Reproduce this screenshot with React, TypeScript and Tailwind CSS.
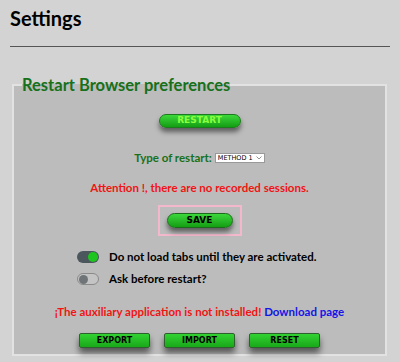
import React from 'react';

const font = { fontFamily: 'Lato, "Noto Sans", sans-serif' };
const btnFont = { fontFamily: '"DejaVu Sans", Verdana, sans-serif' };

const Toggle = ({ on }: { on: boolean }) =>
  on ? (
    <div className="w-[22px] h-[12px] rounded-full bg-[#4b575c] flex items-center justify-end px-[1px]">
      <div className="w-[10px] h-[10px] rounded-full bg-[#1ec51e]" />
    </div>
  ) : (
    <div className="w-[22px] h-[12px] rounded-full bg-[#c4c4c4] border border-[#8a8a8a] flex items-center px-[1px]">
      <div className="w-[9px] h-[9px] rounded-full bg-[#6e7478]" />
    </div>
  );

const BarButton = ({ label }: { label: string }) => (
  <div
    className="w-[71px] h-[15px] flex items-center justify-center rounded-[2px] border border-[#2f5f2f] bg-gradient-to-b from-[#31d331] to-[#19a819] shadow-[0_5px_6px_rgba(0,0,0,0.55)] text-[8px] font-bold text-black"
    style={btnFont}
  >
    {label}
  </div>
);

export default function App() {
  return (
    <div className="w-[400px] h-[362px] overflow-hidden bg-[#d3d3d3] px-[10px]" style={font}>
      <h1 className="pt-[5px] text-[20px] leading-[26px] font-bold text-black">Settings</h1>
      <div className="mt-[15px] h-px bg-[#555]" />
      <fieldset className="mt-[28px] mx-[2px] w-[375px] h-[281px] border-2 border-[#e2e2e2] bg-[#bcbcbc] px-0">
        <legend className="ml-[8px] text-[16.5px] leading-[20px] font-bold text-[#17701a]">Restart Browser preferences</legend>
        <div className="flex flex-col items-center">
          <div
            className="mt-[19px] w-[82px] h-[14px] rounded-full border border-[#1d7a1d] bg-gradient-to-b from-[#3bd83b] to-[#129e12] shadow-[0_4px_5px_rgba(0,0,0,0.5)] flex items-center justify-center text-[9px] font-bold text-[#8aff3d]"
            style={btnFont}
          >
            RESTART
          </div>
          <div className="mt-[23px] flex items-center gap-[3px]">
            <span className="text-[11.5px] leading-[14px] font-bold text-[#17701a]">Type of restart:</span>
            <div className="w-[50px] h-[10px] bg-white border border-[#999] flex items-center justify-between pl-[2px] pr-[2px] overflow-hidden" style={{ fontFamily: '"DejaVu Sans", sans-serif' }}>
              <span className="text-[6.5px] leading-none whitespace-nowrap text-black">METHOD 1</span>
              <svg className="shrink-0" width="6" height="4" viewBox="0 0 6 4"><path d="M0.5 0.5 L3 3 L5.5 0.5" fill="none" stroke="#777" strokeWidth="0.8" /></svg>
            </div>
          </div>
          <div className="mt-[16px] text-[11.5px] leading-[14px] font-bold text-[#f01414]">Attention !, there are no recorded sessions.</div>
          <div className="mt-[10px] w-[84px] h-[31px] border-2 border-[#f4b8cc] flex items-center justify-center">
            <div
              className="w-[66px] h-[15px] rounded-full border border-[#1d6a1d] bg-gradient-to-b from-[#3bd83b] to-[#129e12] shadow-[0_4px_5px_rgba(0,0,0,0.5)] flex items-center justify-center text-[9px] font-bold text-black"
              style={btnFont}
            >
              SAVE
            </div>
          </div>
        </div>
        <div className="mt-[14px] ml-[63px] flex flex-col gap-[8px]">
          <div className="flex items-center gap-[10px]">
            <Toggle on />
            <span className="text-[11.5px] leading-[14px] font-bold text-black">Do not load tabs until they are activated.</span>
          </div>
          <div className="flex items-center gap-[10px]">
            <Toggle on={false} />
            <span className="text-[11.5px] leading-[14px] font-bold text-black">Ask before restart?</span>
          </div>
        </div>
        <div className="mt-[19px] text-center text-[11.5px] leading-[14px] font-bold">
          <span className="text-[#f01414]">¡The auxiliary application is not installed!</span>{' '}
          <span className="text-[#1414e6]">Download page</span>
        </div>
        <div className="mt-[14px] flex justify-center gap-[14px]">
          <BarButton label="EXPORT" />
          <BarButton label="IMPORT" />
          <BarButton label="RESET" />
        </div>
      </fieldset>
    </div>
  );
}
